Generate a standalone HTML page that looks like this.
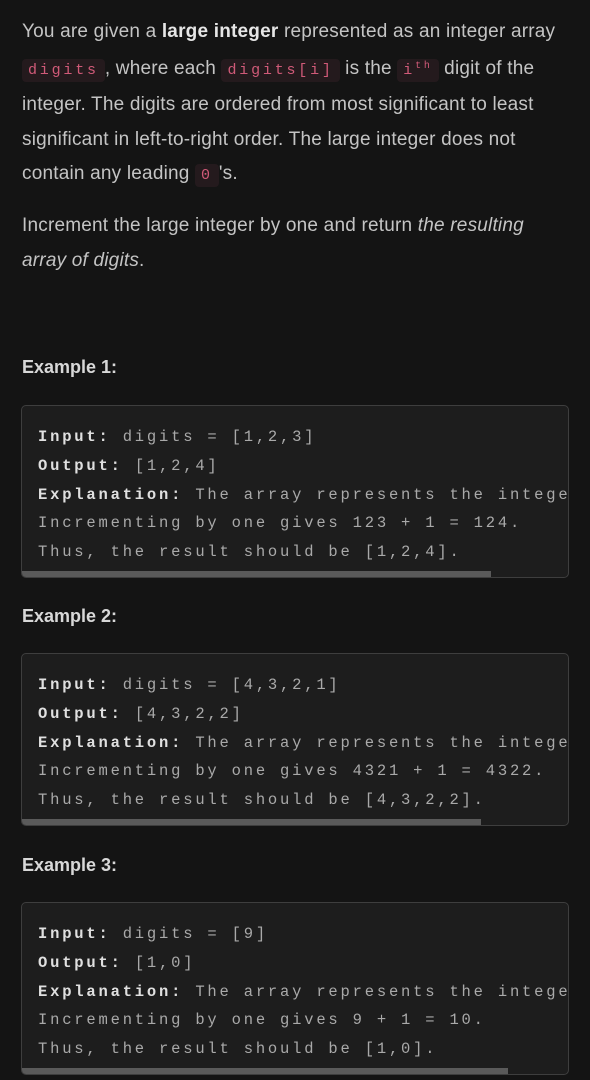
<!DOCTYPE html>
<html><head><meta charset="utf-8"><style>
body{margin:0;width:590px;height:1080px;background:#141414;overflow:hidden;font-family:"Liberation Sans",sans-serif;position:relative}
.p{position:absolute;left:22px;width:600px;font-size:19px;line-height:34.6px;color:#c4c4c4;margin:0;letter-spacing:0.2px;white-space:nowrap}
b{color:#e6e6e6}
code{font-family:"Liberation Mono",monospace;font-size:15px;color:#d05a78;background:#241a1d;border-radius:4px;padding:3px 6px;letter-spacing:2.8px}
h4{position:absolute;left:22px;margin:0;font-size:18px;font-weight:bold;color:#d8d8d8}
.box{position:absolute;left:21px;width:546px;height:171px;background:#1d1d1d;border:1px solid #3e3e3e;border-radius:5px;overflow:hidden}
.box pre{margin:0;position:absolute;left:16px;top:17px;font-family:"Liberation Mono",monospace;font-size:15.5px;letter-spacing:2.8px;line-height:28.8px;color:#a9a9a9;white-space:pre}
.box pre b{color:#e0e0e0}
.bar{position:absolute;left:0;bottom:0;height:6px;background:#5a5a5a}
</style></head><body>
<p class="p" style="top:15px">You are given a <b>large integer</b> represented as an integer array<br><code>digits</code>, where each <code>digits[i]</code> is the <code>i<sup style="font-size:10px">th</sup></code> digit of the<br>integer. The digits are ordered from most significant to least<br>significant in left-to-right order. The large integer does not<br>contain any leading <code>0</code>'s.</p>
<p class="p" style="top:209px">Increment the large integer by one and return <i>the resulting<br>array of digits</i>.</p>
<h4 style="top:357px">Example 1:</h4>
<div class="box" style="top:405px"><pre><b>Input:</b> digits = [1,2,3]
<b>Output:</b> [1,2,4]
<b>Explanation:</b> The array represents the integer 123.
Incrementing by one gives 123 + 1 = 124.
Thus, the result should be [1,2,4].</pre><div class="bar" style="width:469px"></div></div>
<h4 style="top:606px">Example 2:</h4>
<div class="box" style="top:653px"><pre><b>Input:</b> digits = [4,3,2,1]
<b>Output:</b> [4,3,2,2]
<b>Explanation:</b> The array represents the integer 4321.
Incrementing by one gives 4321 + 1 = 4322.
Thus, the result should be [4,3,2,2].</pre><div class="bar" style="width:459px"></div></div>
<h4 style="top:855px">Example 3:</h4>
<div class="box" style="top:902px"><pre><b>Input:</b> digits = [9]
<b>Output:</b> [1,0]
<b>Explanation:</b> The array represents the integer 9.
Incrementing by one gives 9 + 1 = 10.
Thus, the result should be [1,0].</pre><div class="bar" style="width:486px"></div></div>
</body></html>
